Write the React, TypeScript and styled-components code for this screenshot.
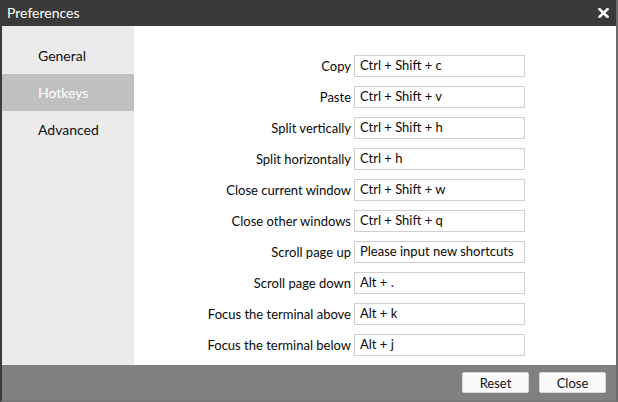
import React from "react";
import styled, { createGlobalStyle } from "styled-components";

const Global = createGlobalStyle`
  html, body { margin: 0; padding: 0; background: #fff; }
  body { font-family: "Lato", "Liberation Sans", sans-serif; }
  * { box-sizing: border-box; }
`;

const Window = styled.div`
  width: 618px;
  height: 402px;
  display: flex;
  flex-direction: column;
  background: #3a3a3a;
  border: 2px solid #3a3a3a;
  border-top: 0;
  border-bottom-color: #7a7a7a;
  border-right-color: #6a6a6a;
  overflow: hidden;
`;

const TitleBar = styled.div`
  height: 26px;
  flex: none;
  display: flex;
  align-items: center;
  justify-content: space-between;
  padding: 0 6px 1px 5px;
  background: #3a3a3a;
  color: #fff;
  font-size: 14px;
`;

const CloseX = styled.button`
  border: 0;
  background: none;
  padding: 0;
  width: 14px;
  height: 14px;
  display: flex;
  align-items: center;
  justify-content: center;
  cursor: pointer;
`;

const Body = styled.div`
  flex: 1;
  display: flex;
  min-height: 0;
`;

const Sidebar = styled.nav`
  width: 132px;
  flex: none;
  background: #ebebeb;
  padding-top: 11px;
  display: flex;
  flex-direction: column;
`;

const NavItem = styled.div<{ $active?: boolean }>`
  height: 37px;
  display: flex;
  align-items: center;
  padding-left: 36px;
  font-size: 14px;
  color: ${(p) => (p.$active ? "#fff" : "#111")};
  background: ${(p) => (p.$active ? "#c0c0c0" : "transparent")};
`;

const Content = styled.div`
  flex: 1;
  background: #fff;
  padding: 29px 0 0 0;
  display: grid;
  grid-template-columns: 217px 171px;
  grid-auto-rows: 22px;
  row-gap: 9px;
  column-gap: 3px;
  align-content: start;
`;

const Label = styled.label`
  font-size: 13px;
  color: #0a0a0a;
  text-align: right;
  line-height: 22px;
  white-space: nowrap;
`;

const KeyInput = styled.div`
  height: 22px;
  border: 1px solid #cfcfcf;
  background: #fff;
  padding-left: 5px;
  font-size: 13px;
  line-height: 19px;
  color: #0a0a0a;
  white-space: nowrap;
`;

const Footer = styled.div`
  height: 35px;
  flex: none;
  background: #808080;
  display: flex;
  justify-content: flex-end;
  align-items: flex-start;
  gap: 10px;
  padding: 7px 10px 0 0;
`;

const Button = styled.button`
  width: 67px;
  height: 21px;
  border: 1px solid #d8d8d8;
  border-radius: 2px;
  background: #fafafa;
  font-family: inherit;
  font-size: 13px;
  color: #111;
  padding: 0;
  cursor: pointer;
`;

const hotkeys: [string, string][] = [
  ["Copy", "Ctrl + Shift + c"],
  ["Paste", "Ctrl + Shift + v"],
  ["Split vertically", "Ctrl + Shift + h"],
  ["Split horizontally", "Ctrl + h"],
  ["Close current window", "Ctrl + Shift + w"],
  ["Close other windows", "Ctrl + Shift + q"],
  ["Scroll page up", "Please input new shortcuts"],
  ["Scroll page down", "Alt + ."],
  ["Focus the terminal above", "Alt + k"],
  ["Focus the terminal below", "Alt + j"],
];

export default function App() {
  return (
    <>
      <Global />
      <Window>
        <TitleBar>
          <span>Preferences</span>
          <CloseX aria-label="close">
            <svg width="11" height="10" viewBox="0 0 11 10">
              <path d="M1.5 1.2 L9.5 8.8 M9.5 1.2 L1.5 8.8" stroke="#fff" strokeWidth="2.6" strokeLinecap="square" />
            </svg>
          </CloseX>
        </TitleBar>
        <Body>
          <Sidebar>
            <NavItem>General</NavItem>
            <NavItem $active>Hotkeys</NavItem>
            <NavItem>Advanced</NavItem>
          </Sidebar>
          <Content>
            {hotkeys.map(([label, key]) => (
              <React.Fragment key={label}>
                <Label>{label}</Label>
                <KeyInput>{key}</KeyInput>
              </React.Fragment>
            ))}
          </Content>
        </Body>
        <Footer>
          <Button>Reset</Button>
          <Button>Close</Button>
        </Footer>
      </Window>
    </>
  );
}
